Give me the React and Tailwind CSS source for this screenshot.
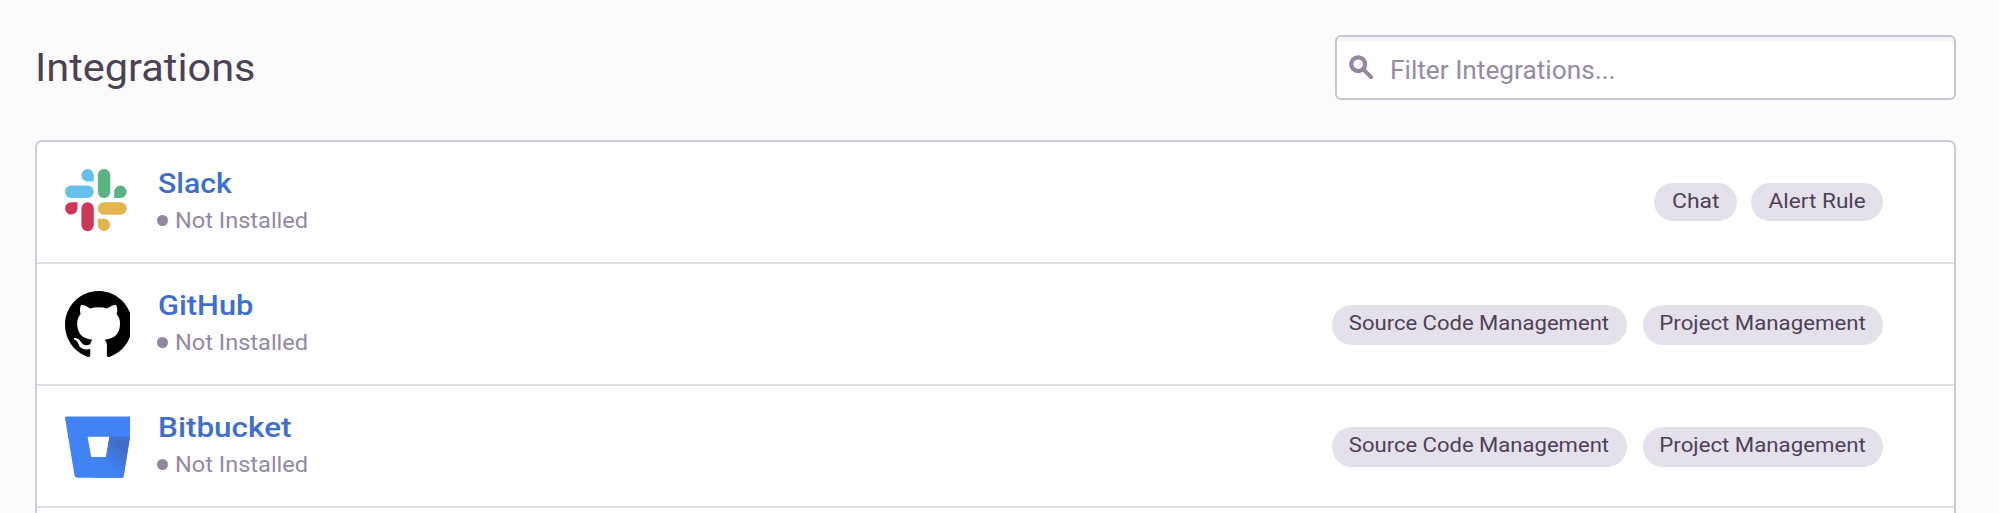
import React from "react";

function SlackLogo() {
  return (
    <svg className="h-[66px] w-[65px]" viewBox="0 0 65 66">
      <g fill="#65c1ec">
        <rect x="0" y="16.5" width="28.8" height="12.5" rx="6.2" />
        <path d="M28.8 12.5h-6.1a6.2 6.2 0 1 1 6.1-6.2z" />
      </g>
      <g fill="#5bb381">
        <rect x="32.8" y="0" width="12.5" height="29" rx="6.2" />
        <path d="M49.2 29v-6.2a6.2 6.2 0 1 1 6.2 6.2z" />
      </g>
      <g fill="#ce375c">
        <rect x="16.4" y="33.2" width="12.4" height="29" rx="6.2" />
        <path d="M12.5 33.2v6.3a6.2 6.2 0 1 1-6.2-6.3z" />
      </g>
      <g fill="#e5b34f">
        <rect x="32.8" y="33.2" width="28.9" height="12.5" rx="6.2" />
        <path d="M32.8 49.7H39a6.2 6.2 0 1 1-6.2 6.3z" />
      </g>
    </svg>
  );
}

function GitHubLogo() {
  return (
    <svg className="h-[66px] w-[65px]" viewBox="0 0 94.5 96">
      <path
        fill="#000"
        fillRule="evenodd"
        d="M48.854 0C21.839 0 0 22 0 49.217c0 21.756 13.993 40.172 33.405 46.69 2.427.49 3.316-1.059 3.316-2.362 0-1.141-.08-5.052-.08-9.127-13.59 2.934-16.42-5.867-16.42-5.867-2.184-5.704-5.42-7.17-5.42-7.17-4.448-3.015.324-3.015.324-3.015 4.934.326 7.523 5.052 7.523 5.052 4.367 7.496 11.404 5.378 14.235 4.074.404-3.178 1.699-5.378 3.074-6.6-10.839-1.141-22.243-5.378-22.243-24.283 0-5.378 1.94-9.778 5.014-13.2-.485-1.222-2.184-6.275.486-13.038 0 0 4.125-1.304 13.426 5.052a46.97 46.97 0 0 1 12.214-1.63c4.125 0 8.33.571 12.213 1.63 9.302-6.356 13.427-5.052 13.427-5.052 2.67 6.763.97 11.816.485 13.038 3.155 3.422 5.015 7.822 5.015 13.2 0 18.905-11.404 23.06-22.324 24.283 1.78 1.548 3.316 4.481 3.316 9.126 0 6.6-.08 11.897-.08 13.526 0 1.304.89 2.853 3.316 2.364 19.412-6.52 33.405-24.935 33.405-46.691C97.707 22 75.788 0 48.854 0z"
      />
    </svg>
  );
}

function BitbucketLogo() {
  return (
    <svg className="h-[66px] w-[65px]" viewBox="0 0 65 66">
      <defs>
        <linearGradient id="bucket-shade" gradientUnits="userSpaceOnUse" x1="60" y1="27" x2="38" y2="50">
          <stop offset="0.25" stopColor="#416dcb" />
          <stop offset="1" stopColor="#4083f6" />
        </linearGradient>
      </defs>
      <path
        fill="#4083f6"
        fillRule="evenodd"
        d="M1.6 3.4H65V24l-6.3 38.9a2.2 2.2 0 0 1-2.2 1.9H12.4a3 3 0 0 1-2.9-2.5L.1 5.3a1.6 1.6 0 0 1 1.5-1.9zM22.6 23.7 26.2 44H41L44.4 23.7z"
      />
      <path
        fill="url(#bucket-shade)"
        d="M44.4 23.7H65l-6.3 39.2a2.2 2.2 0 0 1-2.2 1.9H28L30 44h11z"
      />
    </svg>
  );
}

const codeHostTags = [
  { label: "Source Code Management", pill: "w-[295.5px] h-[39.5px]", text: "scale-x-[1.05]" },
  { label: "Project Management", pill: "w-[240.5px] h-[39.5px]", text: "scale-x-[1.058]" },
];

const integrations = [
  {
    name: "Slack",
    nameScale: "scale-x-[1.06]",
    Logo: SlackLogo,
    tagGap: "gap-[14px]",
    tags: [
      { label: "Chat", pill: "w-[83px] h-[37.5px]", text: "scale-x-[1.09]" },
      { label: "Alert Rule", pill: "w-[132px] h-[37.5px]", text: "scale-x-[1.075]" },
    ],
  },
  {
    name: "GitHub",
    nameScale: "scale-x-[1.08]",
    Logo: GitHubLogo,
    tagGap: "gap-[15.5px]",
    tags: codeHostTags,
  },
  {
    name: "Bitbucket",
    nameScale: "scale-x-[1.105]",
    Logo: BitbucketLogo,
    tagGap: "gap-[15.5px]",
    tags: codeHostTags,
  },
];

function IntegrationRow({ name, nameScale, Logo, tagGap, tags }) {
  return (
    <li className="flex h-[122px] items-start border-b-2 border-[#e2dbe8] pl-[28px] pr-[71px]">
      <div className="mt-[27px] shrink-0">
        <Logo />
      </div>
      <div className="ml-[27px] mt-[24px] grow">
        <a className={`ml-[0.5px] block w-fit origin-left text-[28.5px] font-medium leading-[35px] text-[#3f6fcc] ${nameScale}`}>
          {name}
        </a>
        <div className="mt-[5px] flex items-center gap-[7px] text-[22.5px] leading-[28px] text-[#9389a2]">
          <span className="size-[11px] rounded-full bg-[#93879f]" />
          <span className="origin-left scale-x-[1.047]">Not Installed</span>
        </div>
      </div>
      <div className={`mt-[41px] flex ${tagGap}`}>
        {tags.map((tag) => (
          <span
            key={tag.label}
            className={`flex justify-center whitespace-nowrap rounded-full bg-[#e5e1ea] text-[21px] leading-[37.5px] text-[#4d4158] ${tag.pill}`}
          >
            <span className={tag.text}>{tag.label}</span>
          </span>
        ))}
      </div>
    </li>
  );
}

export default function App() {
  return (
    <div className="h-[513px] overflow-hidden bg-[#fbfbfb] pl-[35px] pr-[43px] pt-[35px] font-['Roboto',sans-serif]">
      <header className="flex h-[65px] items-center justify-between">
        <h1 className="origin-left scale-x-[1.05] text-[39.5px] leading-[48px] text-[#4d4158]">Integrations</h1>
        <div className="flex h-[65px] w-[621px] items-center rounded-[6px] border-2 border-[#cac3d4] bg-white pl-[12px] shadow-[inset_0_4px_0_#f5f5f6]">
          <svg className="h-[25px] w-[25px] shrink-0" viewBox="0 0 25 25" fill="none" stroke="#93879f">
            <circle cx="9.2" cy="9.2" r="6.9" strokeWidth="4.2" />
            <path d="M14.3 14.3l7.8 7.8" strokeWidth="4" strokeLinecap="round" />
          </svg>
          <input
            type="text"
            placeholder="Filter Integrations..."
            className="ml-[16px] h-full w-[500px] origin-left scale-x-[1.05] bg-transparent pt-[6px] text-[25px] outline-none placeholder:text-[#968ba7]"
          />
        </div>
      </header>
      <ul className="mt-[40px] h-[400px] rounded-[7px] border-2 border-[#d1cad9] bg-white">
        {integrations.map((integration) => (
          <IntegrationRow key={integration.name} {...integration} />
        ))}
      </ul>
    </div>
  );
}
